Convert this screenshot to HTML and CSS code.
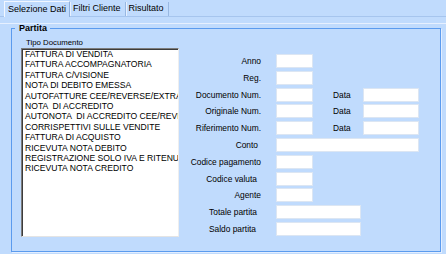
FILE: index.html
```html
<!DOCTYPE html>
<html lang="it">
<head>
    <meta charset="UTF-8">
    <title>Selezione Dati</title>
    <link rel="stylesheet" href="styles.css">
</head>
<body>
    <div class="tabs">
        <div class="tab active">Selezione Dati</div>
        <div class="tab">Filtri Cliente</div>
        <div class="tab">Risultato</div>
    </div>

    <div class="page">
        <fieldset class="group">
            <legend>Partita</legend>
            <div class="group-body">
                <div class="left">
                    <div class="caption">Tipo Documento</div>
                    <ul class="listbox">
                        <li>FATTURA DI VENDITA</li>
                        <li>FATTURA ACCOMPAGNATORIA</li>
                        <li>FATTURA C/VISIONE</li>
                        <li>NOTA DI DEBITO EMESSA</li>
                        <li>AUTOFATTURE CEE/REVERSE/EXTRA</li>
                        <li>NOTA &nbsp;DI ACCREDITO</li>
                        <li>AUTONOTA &nbsp;DI ACCREDITO CEE/REVERSE</li>
                        <li>CORRISPETTIVI SULLE VENDITE</li>
                        <li>FATTURA DI ACQUISTO</li>
                        <li>RICEVUTA NOTA DEBITO</li>
                        <li>REGISTRAZIONE SOLO IVA E RITENUTE</li>
                        <li>RICEVUTA NOTA CREDITO</li>
                    </ul>
                </div>

                <div class="form">
                    <div class="row"><label>Anno</label><span class="box short"></span></div>
                    <div class="row"><label>Reg.</label><span class="box short"></span></div>
                    <div class="row"><label>Documento Num.</label><span class="box short"></span><label class="data">Data</label><span class="box date"></span></div>
                    <div class="row"><label>Originale Num.</label><span class="box short"></span><label class="data">Data</label><span class="box date"></span></div>
                    <div class="row"><label>Riferimento Num.</label><span class="box short"></span><label class="data">Data</label><span class="box date"></span></div>
                    <div class="row"><label class="in3">Conto</label><span class="box wide"></span></div>
                    <div class="row"><label>Codice pagamento</label><span class="box short"></span></div>
                    <div class="row"><label class="in4">Codice valuta</label><span class="box short"></span></div>
                    <div class="row"><label>Agente</label><span class="box short"></span></div>
                    <div class="row"><label class="in4">Totale partita</label><span class="box mid"></span></div>
                    <div class="row"><label class="in5">Saldo partita</label><span class="box mid"></span></div>
                </div>
            </div>
        </fieldset>
    </div>
</body>
</html>
```

FILE: styles.css
```css
body {
    margin: 0;
    width: 446px;
    height: 254px;
    overflow: hidden;
    background-color: #c0dbfd;
    font-family: "Liberation Sans", Arial, sans-serif;
    color: #000;
}

/* linguette */
.tabs {
    display: flex;
    align-items: flex-end;
    height: 16px;
    padding-left: 4px;
    border-bottom: 1px solid #a6c5ee;
}

.tab {
    height: 14px;
    padding: 0 4px 0 3px;
    font-size: 9px;
    line-height: 13px;
    border-right: 1px solid #98b8e2;
    box-shadow: inset 1px 0 0 #e6f0ff;
}

.tab.active {
    height: 15px;
    line-height: 14px;
    padding: 0 3px;
    margin-bottom: -1px;
    background-color: #c0dbfd;
    border: 1px solid #f2f7ff;
    border-right-color: #8fb0dc;
    border-bottom: none;
    box-shadow: none;
}

.page {
    height: 237px;
    padding: 0 2px 0 11px;
    box-shadow: inset 0 1px 0 #e6f0ff;
}

/* gruppo Partita */
.group {
    margin: 6px 0 0;
    padding: 0;
    width: 430px;
    height: 229px;
    border: 1px solid #5b9bee;
    box-shadow: 1px 1px 0 #e3eeff;
    box-sizing: border-box;
}

.group legend {
    margin-left: 3px;
    padding: 0 3px 0 4px;
    font-size: 9px;
    font-weight: bold;
    line-height: 11px;
}

.group-body {
    display: flex;
}

.left {
    margin-left: 9px;
}

.caption {
    margin: 4px 0 0 5px;
    height: 10px;
    font-size: 7.8px;
    line-height: 10px;
}

.listbox {
    list-style: none;
    margin: 0;
    padding: 0 0 0 3px;
    width: 158px;
    height: 189px;
    box-sizing: border-box;
    overflow: hidden;
    background-color: #fff;
    border: 1px solid;
    border-color: #7c7c7c #eeeeee #e4e4e4 #7c7c7c;
    box-shadow: inset 1px 1px 0 #3c3c3c;
}

.listbox li {
    font-size: 8.6px;
    line-height: 10.4px;
    white-space: nowrap;
}

/* campi a destra */
.form {
    margin: 20px 0 0 1px;
}

.row {
    display: flex;
    align-items: center;
    height: 14px;
    margin-bottom: 2.8px;
}

.row label {
    width: 81px;
    margin-right: 15px;
    box-sizing: border-box;
    text-align: right;
    font-size: 8.4px;
    white-space: nowrap;
}

.row label.in3 {
    padding-right: 3px;
}

.row label.in4 {
    padding-right: 4px;
}

.row label.in5 {
    padding-right: 5px;
}

.row label.data {
    width: 30px;
    margin: 0 0 0 20px;
    text-align: left;
}

.box {
    display: block;
    height: 14px;
    box-sizing: border-box;
    background-color: #fff;
    border: 1px solid #dce6f3;
}

.box.short {
    width: 37px;
}

.box.date {
    width: 56px;
}

.box.wide {
    width: 143px;
}

.box.mid {
    width: 85px;
}
```
